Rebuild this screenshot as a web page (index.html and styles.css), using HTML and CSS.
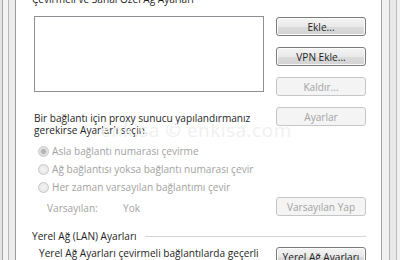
FILE: index.html
```html
<html>
  <head>
    <title>Bağlantılar</title>
    <link rel="stylesheet" href="styles.css">
  </head>
  <body>
    <div class="window">
      <div class="frame-left"></div>
      <div class="panel">
        <div class="group-title">Çevirmeli ve Sanal Özel Ağ Ayarları</div>
        <div class="row conn-row">
          <div class="listbox"></div>
          <div class="btn-col">
            <button class="btn">Ekle...</button>
            <button class="btn">VPN Ekle...</button>
            <button class="btn" disabled>Kaldır...</button>
          </div>
        </div>
        <div class="row proxy-row">
          <p class="note">Bir bağlantı için proxy sunucu yapılandırmanız<br>gerekirse Ayarlar'ı seçin.</p>
          <button class="btn" disabled>Ayarlar</button>
        </div>
        <div class="radios">
          <div class="radio checked"><span class="circle"></span>Asla bağlantı numarası çevirme</div>
          <div class="radio"><span class="circle"></span>Ağ bağlantısı yoksa bağlantı numarası çevir</div>
          <div class="radio"><span class="circle"></span>Her zaman varsayılan bağlantımı çevir</div>
        </div>
        <div class="row default-row">
          <div class="default-info"><span class="default-label">Varsayılan:</span><span>Yok</span></div>
          <button class="btn" disabled>Varsayılan Yap</button>
        </div>
        <div class="lan-head"><span>Yerel Ağ (LAN) Ayarları</span><span class="rule"></span></div>
        <div class="row lan-row">
          <p class="note lan-note">Yerel Ağ Ayarları çevirmeli bağlantılarda geçerli</p>
          <button class="btn">Yerel Ağ Ayarları</button>
        </div>
        <div class="watermark">enkisa © enkisa.com</div>
      </div>
      <div class="frame-right"></div>
    </div>
  </body>
</html>
```

FILE: styles.css
```css
* {
  box-sizing: border-box;
}
html {
  background-color: #f0f0f0;
}
body {
  margin: 0;
  width: 400px;
  height: 260px;
  overflow: hidden;
  font-family: "Open Sans", "Noto Sans", sans-serif;
  font-size: 10.1px;
  color: #1e1e1e;
}
.window {
  display: flex;
  height: 260px;
}
.frame-left {
  width: 16px;
  background: linear-gradient(90deg, #e4e4e4 0 2px, #a8a8a8 2px 3px, #f3f3f3 3px 8px, #b8b8b8 8px 9px, #ececec 9px 15px, #9c9c9c 15px 16px);
}
.frame-right {
  width: 19px;
  background: linear-gradient(90deg, #a4a4a4 0 1px, #f1f1f1 1px 8px, #b4b4b4 8px 9px, #e9e9e9 9px 15px, #bcbcbc 15px 16px, #f1f1f1 16px 19px);
}
.panel {
  position: relative;
  flex: 1;
  background-color: #ffffff;
  padding: 0 15px 0 18px;
}
.group-title {
  margin: -7px 0 0 -2px;
  line-height: 13px;
}
.row {
  display: grid;
  grid-template-columns: 1fr 90px;
  column-gap: 12px;
}
.conn-row {
  margin-top: 10px;
}
.listbox {
  height: 76px;
  border: 1px solid #8d8f94;
  background-color: #ffffff;
}
.btn-col {
  display: flex;
  flex-direction: column;
  gap: 11px;
  padding-top: 1px;
}
.btn {
  height: 19px;
  padding: 0;
  border: 1px solid #7b7b7b;
  border-radius: 3px;
  background: linear-gradient(#f4f4f4, #e9e9e9 50%, #dcdcdc 51%, #d2d2d2);
  box-shadow: inset 0 0 0 1px #fbfbfb;
  font-family: inherit;
  font-size: inherit;
  color: #1e1e1e;
}
.btn:disabled {
  border-color: #c4c6c8;
  background: #f4f4f4;
  box-shadow: none;
  color: #a2a2a2;
}
.proxy-row {
  margin-top: 11px;
  align-items: start;
}
.note {
  margin: 0;
  padding-top: 5px;
  line-height: 12px;
}
.radios {
  margin-top: 6px;
  color: #a2a2a2;
}
.radio {
  display: flex;
  align-items: center;
  height: 18px;
  padding-left: 4px;
}
.circle {
  width: 11px;
  height: 11px;
  margin-right: 3px;
  border: 1px solid #c8c8c8;
  border-radius: 50%;
  background: radial-gradient(#f4f4f4, #e2e2e2);
}
.radio.checked .circle {
  background: radial-gradient(#b4b4b4 0 2px, #dcdcdc 3px, #f4f4f4);
}
.default-row {
  margin-top: 1px;
  color: #a2a2a2;
}
.default-info {
  display: flex;
  align-items: center;
  padding: 2px 0 0 13px;
}
.default-label {
  width: 76px;
}
.lan-head {
  display: flex;
  align-items: center;
  gap: 8px;
  margin: 14px 0 0 -2px;
  line-height: 13px;
}
.rule {
  flex: 1;
  border-top: 1px solid #d5d5d5;
}
.lan-row {
  margin-top: 4px;
  align-items: start;
}
.lan-note {
  padding: 0 0 0 5px;
}
.watermark {
  position: absolute;
  left: 84px;
  top: 117px;
  font-size: 19px;
  letter-spacing: 0.5px;
  color: #f0f0f0;
  pointer-events: none;
}
```
